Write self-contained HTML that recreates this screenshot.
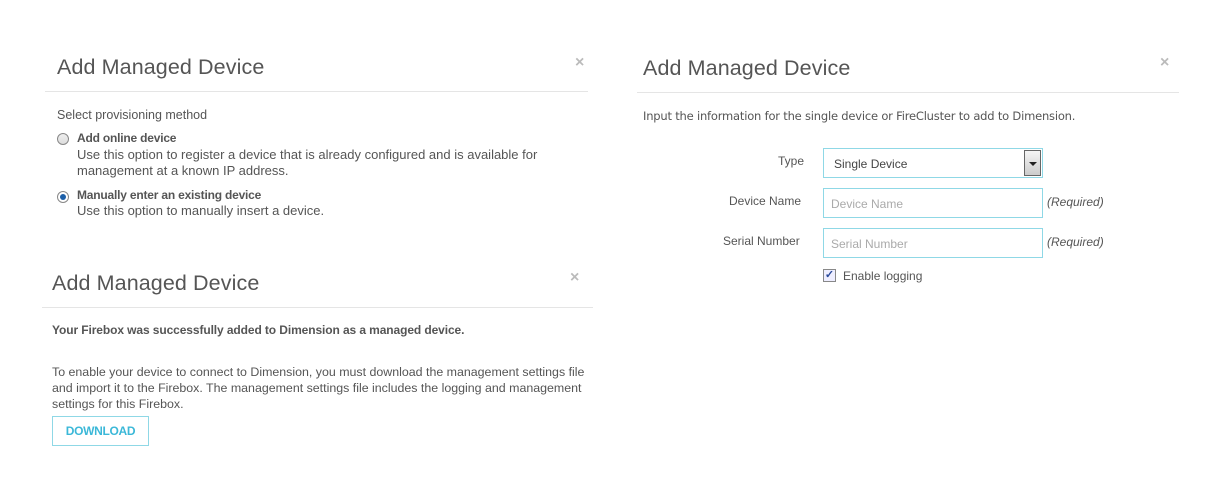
<!DOCTYPE html>
<html><head><meta charset="utf-8"><style>
*{margin:0;padding:0;box-sizing:border-box}
body{width:1224px;height:496px;background:#fff;position:relative;font-family:"Liberation Sans",sans-serif;color:#555;font-size:12px;overflow:hidden}
.a{position:absolute;white-space:nowrap}
.t{font-size:21.5px;color:#555;font-family:"Liberation Sans",sans-serif;font-weight:normal;letter-spacing:0.1px}
.x{color:#bbb;font-size:16px;font-weight:bold}
.hr{position:absolute;height:1px;background:#e5e5e5}
.b{font-weight:bold}
.inp{position:absolute;border:1px solid #8fd8e6;background:#fff;height:30px;width:220px}
.ph{color:#aaa;font-size:12px;position:absolute;left:7px;top:8px}
.req{font-style:italic;font-size:12px}
.radio{position:absolute;width:12px;height:12px;border-radius:50%;border:1px solid #888;background:linear-gradient(#eee,#ddd)}
</style></head><body>
<div class="a t" style="left:57px;top:55px">Add Managed Device</div>
<div class="a x" style="left:575px;top:54px">×</div>
<div class="hr" style="left:45px;top:91px;width:543px"></div>
<div class="a" style="left:57px;top:108px;font-size:12.5px">Select provisioning method</div>
<div class="radio" style="left:57px;top:133px"></div>
<div class="a b" style="left:77px;top:131px;letter-spacing:-0.2px">Add online device</div>
<div class="a" style="left:77px;top:147px;line-height:16px;font-size:13px">Use this option to register a device that is already configured and is available for<br>management at a known IP address.</div>
<div class="radio" style="left:57px;top:191px;background:#fff"><div style="position:absolute;left:2px;top:2px;width:6px;height:6px;border-radius:50%;background:#1c5fa8"></div></div>
<div class="a b" style="left:77px;top:188px;letter-spacing:-0.2px">Manually enter an existing device</div>
<div class="a" style="left:77px;top:203px;font-size:13px">Use this option to manually insert a device.</div>

<div class="a t" style="left:52px;top:271px">Add Managed Device</div>
<div class="a x" style="left:570px;top:269px">×</div>
<div class="hr" style="left:42px;top:307px;width:551px"></div>
<div class="a b" style="left:52px;top:323px;font-size:12px;letter-spacing:-0.1px">Your Firebox was successfully added to Dimension as a managed device.</div>
<div class="a" style="left:52px;top:364px;line-height:16px;font-size:12.4px">To enable your device to connect to Dimension, you must download the management settings file<br>and import it to the Firebox. The management settings file includes the logging and management<br>settings for this Firebox.</div>
<div class="a" style="left:52px;top:416px;width:97px;height:30px;border:1px solid #8fd8e6;color:#3bb8d8;font-weight:bold;text-align:center;line-height:28px;letter-spacing:-0.3px">DOWNLOAD</div>

<div class="a t" style="left:643px;top:56px">Add Managed Device</div>
<div class="a x" style="left:1160px;top:54px">×</div>
<div class="hr" style="left:637px;top:92px;width:542px"></div>
<div class="a" style="left:643px;top:109px;font-family:'DejaVu Sans',sans-serif;font-size:11.5px;letter-spacing:-0.2px">Input the information for the single device or FireCluster to add to Dimension.</div>

<div class="a" style="left:778px;top:154px">Type</div>
<div class="inp" style="left:823px;top:148px"><span class="a" style="left:10px;top:8px;color:#444">Single Device</span><div style="position:absolute;right:1px;top:1px;width:17px;height:26px;border:1px solid #666;background:linear-gradient(#f5f5f5,#ccc)"><div style="position:absolute;left:4px;top:11px;border-left:4px solid transparent;border-right:4px solid transparent;border-top:4px solid #222"></div></div></div>

<div class="a" style="left:729px;top:194px">Device Name</div>
<div class="inp" style="left:823px;top:188px"><span class="ph">Device Name</span></div>
<div class="a req" style="left:1047px;top:195px">(Required)</div>

<div class="a" style="left:723px;top:234px">Serial Number</div>
<div class="inp" style="left:823px;top:228px"><span class="ph">Serial Number</span></div>
<div class="a req" style="left:1047px;top:235px">(Required)</div>

<div class="a" style="left:823px;top:269px;width:13px;height:13px;border:1px solid #888;background:#eef;color:#2a4a9a;font-size:11px;line-height:11px;text-align:center;font-weight:bold">✓</div>
<div class="a" style="left:843px;top:269px">Enable logging</div>
</body></html>
